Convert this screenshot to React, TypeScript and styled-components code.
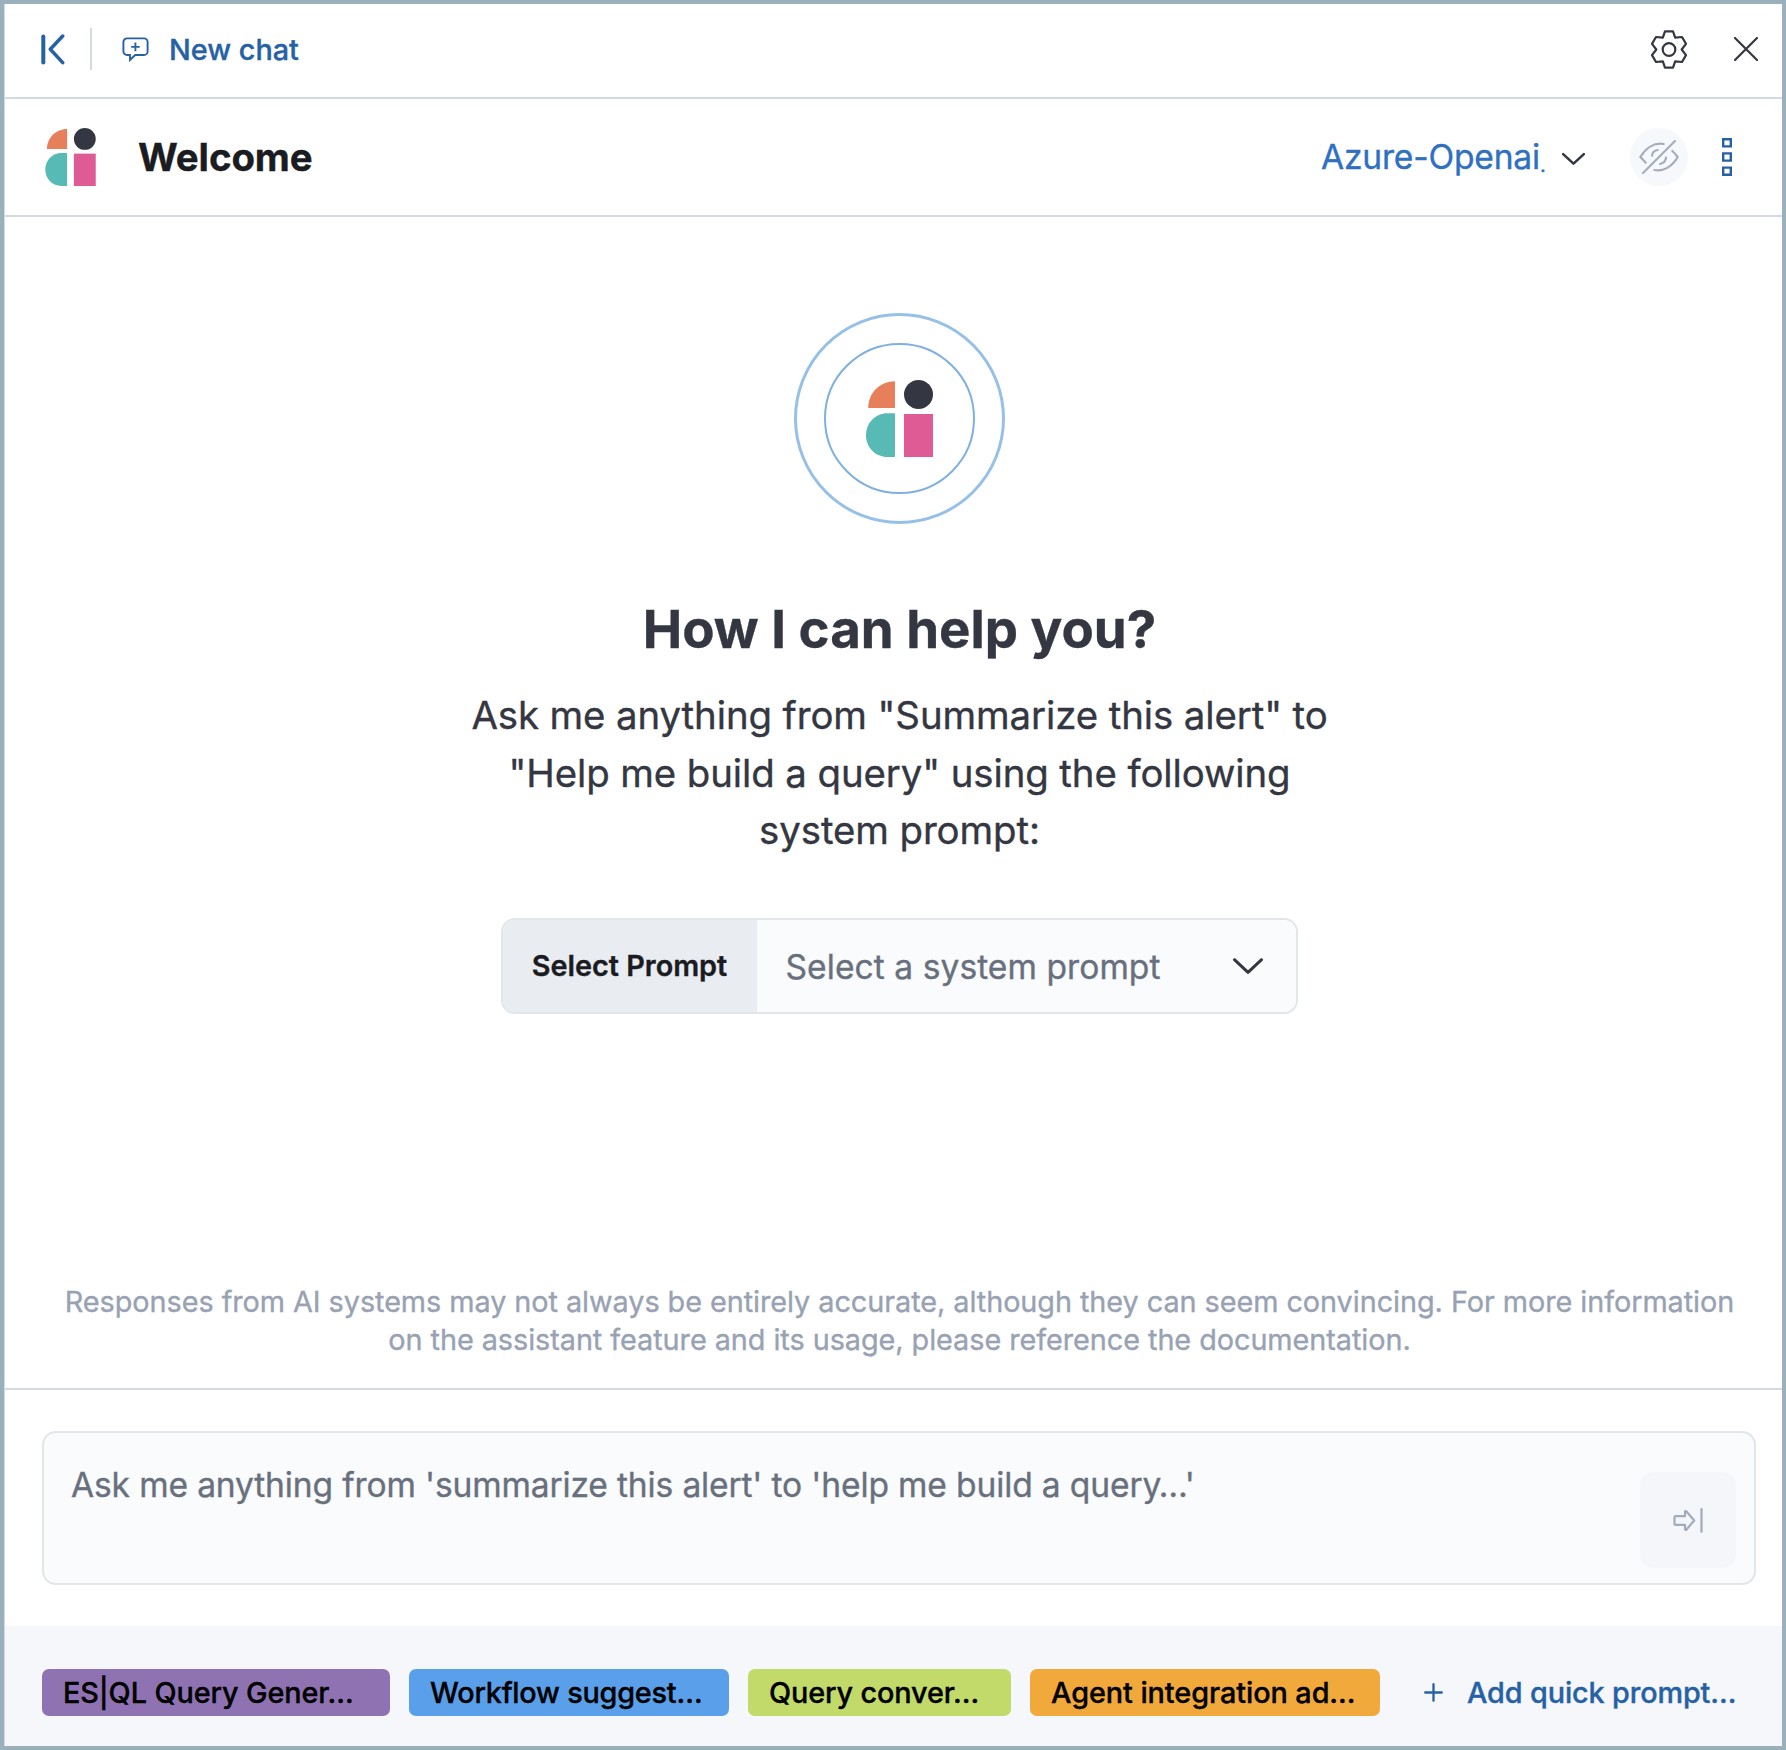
import React from 'react';
import styled, { createGlobalStyle } from 'styled-components';

const colors = {
  frame: '#9ab1bd',
  line: '#d3dae6',
  primary: '#2761a5',
  link: '#2f70c0',
  ink: '#343741',
  title: '#1a1c21',
  subdued: '#69707d',
  muted: '#98a2b3',
};

const GlobalStyle = createGlobalStyle`
  *, *::before, *::after { box-sizing: border-box; }
  body {
    margin: 0;
    background: #fff;
    font-family: Inter, 'Liberation Sans', sans-serif;
    font-weight: 400;
    -webkit-text-stroke-width: 0.35px;
    color: ${colors.ink};
  }
  button { font: inherit; color: inherit; border: 0; background: none; padding: 0; }
  h1, h2, p { margin: 0; }
  svg { display: block; flex: none; }
`;

const Frame = styled.div`
  width: 1786px;
  height: 1750px;
  border: 4px solid ${colors.frame};
  overflow: hidden;
`;

const Panel = styled.div`
  height: 100%;
  border-left: 1px solid ${colors.line};
  display: flex;
  flex-direction: column;
  background: #fff;
`;

const TopBar = styled.header`
  flex: none;
  height: 95px;
  padding: 0 24px 3px 36px;
  border-bottom: 2px solid ${colors.line};
  display: flex;
  align-items: center;
`;

const VerticalRule = styled.span`
  width: 2px;
  height: 42px;
  margin: 0 30px 0 25px;
  background: ${colors.line};
`;

const NewChat = styled.button`
  display: flex;
  align-items: center;
  gap: 20px;
  color: ${colors.primary};
  font-size: 28.8px;
  font-weight: 500;
  line-height: 44px;
`;

const NewChatLabel = styled.span`
  padding-top: 1px;
`;

const Actions = styled.div<{ $gap: number }>`
  margin-left: auto;
  display: flex;
  align-items: center;
  gap: ${(p) => p.$gap}px;
`;

const TitleBar = styled.header`
  flex: none;
  height: 118px;
  padding: 0 50px 0 40px;
  border-bottom: 2px solid ${colors.line};
  display: flex;
  align-items: center;
`;

const Title = styled.h1`
  margin-left: 42px;
  font-size: 38.4px;
  line-height: 48px;
  font-weight: 700;
  letter-spacing: -0.1px;
  color: ${colors.title};
`;

const Connector = styled.button`
  display: flex;
  align-items: center;
  gap: 17px;

  svg { margin-top: 4px; }
`;

const ConnectorName = styled.span`
  width: 223px;
  white-space: nowrap;
  text-align: left;
  font-size: 33.6px;
  line-height: 48px;
  letter-spacing: -0.2px;
  color: ${colors.link};
`;

const NameTail = styled.span`
  font-size: 20px;
  line-height: 1;
  vertical-align: -3px;
`;

const RoundButton = styled.button`
  width: 58px;
  height: 58px;
  margin-left: 44px;
  border-radius: 50%;
  background: #f7f8fc;
  display: grid;
  place-items: center;
`;

const MenuButton = styled.button`
  margin-left: 34px;
`;

const Main = styled.main`
  flex: 1;
  padding: 96px 41px 29px 53px;
  display: flex;
  flex-direction: column;
  align-items: center;
  text-align: center;
`;

const OuterRing = styled.div`
  width: 211px;
  height: 211px;
  border: 3px solid #97c0e6;
  border-radius: 50%;
  display: grid;
  place-items: center;
`;

const InnerRing = styled.div`
  width: 151px;
  height: 151px;
  border: 2px solid #7eb0e0;
  border-radius: 50%;
  display: grid;
  place-items: center;
`;

const Heading = styled.h2`
  margin-top: 73px;
  font-size: 52.8px;
  line-height: 64px;
  font-weight: 700;
`;

const Lead = styled.p`
  width: 864px;
  margin-top: 26px;
  font-size: 38.4px;
  line-height: 57.6px;
  letter-spacing: -0.1px;
`;

const PromptSelect = styled.div`
  width: 797px;
  height: 96px;
  margin-top: 58px;
  border: 2px solid #e2e5e9;
  border-radius: 14px;
  overflow: hidden;
  display: flex;
`;

const PromptLabel = styled.span`
  width: 254px;
  padding-right: 1px;
  background: #e9ecf1;
  color: ${colors.title};
  font-size: 28.8px;
  font-weight: 600;
  line-height: 92px;
`;

const PromptValue = styled.span`
  flex: 1;
  padding: 2px 31px 0 28.5px;
  background: #fafbfd;
  display: flex;
  align-items: center;
  justify-content: space-between;
  color: ${colors.subdued};
  font-size: 33.6px;
  letter-spacing: 0.05px;

  svg { margin-top: -1px; }
`;

const Disclaimer = styled.p`
  margin-top: auto;
  font-size: 28.8px;
  line-height: 38px;
  letter-spacing: -0.045px;
  color: ${colors.muted};
`;

const Composer = styled.section`
  flex: none;
  height: 238px;
  padding: 41px 26px 0 37px;
  border-top: 2px solid ${colors.line};
`;

const PromptInput = styled.div`
  height: 154px;
  padding: 28px 18px 15px 27px;
  border: 2px solid #e2e5e9;
  border-radius: 14px;
  background: #fafbfd;
  display: flex;
  justify-content: space-between;
`;

const Placeholder = styled.span`
  font-size: 33.6px;
  line-height: 48px;
  letter-spacing: -0.15px;
  color: ${colors.subdued};
`;

const SendButton = styled.button`
  align-self: flex-end;
  width: 96px;
  height: 96px;
  border-radius: 14px;
  background: #f4f6fa;
  display: grid;
  place-items: center;
`;

const QuickPrompts = styled.footer`
  flex: none;
  height: 120px;
  padding: 43px 0 0 37px;
  background: #f5f7fb;
  display: flex;
  gap: 19px;
  font-size: 28.8px;
  font-weight: 500;
  line-height: 47px;
  white-space: nowrap;
`;

const Badge = styled.button<{ $color: string; $width: number; $tracking?: number }>`
  width: ${(p) => p.$width}px;
  height: 47px;
  padding: 0 21px;
  border-radius: 7px;
  background: ${(p) => p.$color};
  letter-spacing: ${(p) => p.$tracking ?? -0.06}px;
  text-align: left;
  color: #000;
`;

const AddPrompt = styled.button`
  height: 47px;
  margin-left: 25px;
  display: flex;
  align-items: center;
  gap: 24px;
  letter-spacing: -0.12px;
  color: ${colors.primary};
`;

const AssistantLogo = ({ width, height }: { width: number; height: number }) => (
  <svg width={width} height={height} viewBox="0 0 67 77">
    <path d="M29 1.3V28H2.2C2.2 13 14 1.3 29 1.3Z" fill="#e87f5b" />
    <path d="M29 33.3V77H21.5C9.5 77 0 67.5 0 55.2S9.5 33.3 21.5 33.3Z" fill="#58bab4" />
    <circle cx="52.5" cy="14.5" r="14.5" fill="#343741" />
    <path d="M38 34h29v43H38z" fill="#de5b95" />
  </svg>
);

const CollapseIcon = () => (
  <svg width="24" height="31" viewBox="0 0 24 31" fill="none" stroke={colors.primary} strokeLinecap="round" strokeLinejoin="round">
    <path d="M2.3 2.5v26" strokeWidth="4" />
    <path d="M21.7 2 9.3 15.3 21.7 28.6" strokeWidth="3.5" />
  </svg>
);

const NewChatIcon = () => (
  <svg width="27" height="25" viewBox="0 0 27 25" fill="none" stroke={colors.primary} strokeWidth="1.9">
    <path d="M5 1.4h17a3.6 3.6 0 0 1 3.6 3.6v9.4a3.6 3.6 0 0 1-3.6 3.6h-8.8L8 23v-5H5a3.6 3.6 0 0 1-3.6-3.6V5A3.6 3.6 0 0 1 5 1.4Z" />
    <path d="M13.4 5.6v8.6M9.1 9.9h8.6" />
  </svg>
);

const GearIcon = () => (
  <svg width="38" height="39" viewBox="0 0 114 117" fill="none" stroke={colors.ink} strokeWidth="6.6" strokeLinejoin="round">
    <path d="M45 4h24l6.5 19L96 21l12 20.500L95 58.500 108 75.500 96 96l-20.500-2L69 113H45l-6.500-19L18 96 6 75.500 19 58.500 6 41.500 18 21l20.500 2Z" />
    <circle cx="57" cy="58.500" r="19" />
  </svg>
);

const CloseIcon = () => (
  <svg width="24" height="24" viewBox="0 0 24 24" fill="none" stroke={colors.ink} strokeWidth="2.2" strokeLinecap="round">
    <path d="m1 1 22 22M23 1 1 23" />
  </svg>
);

const ChevronIcon = ({ width, stroke }: { width: number; stroke: number }) => (
  <svg width={width} height={width / 2 + 2} viewBox="0 0 24 14" fill="none" stroke={colors.ink} strokeWidth={stroke} strokeLinecap="round" strokeLinejoin="round">
    <path d="m2 2 10 9.300L22 2" />
  </svg>
);

const EyeClosedIcon = () => (
  <svg width="40" height="36" viewBox="0 0 120 108" fill="none" stroke="#a5adbc" strokeWidth="6.6" strokeLinecap="round">
    <path d="M12 102 108 6" />
    <path d="M20 71C14 65 9 59 4 54 20 28 45 10 74 15" strokeLinejoin="round" />
    <path d="M46 93C74 99 101 81 116 54 111 47 106 41 100 36" strokeLinejoin="round" />
    <path d="M39 50C40 41 47 34 56 33M81 56C80 65 73 73 63 75" />
  </svg>
);

const MenuIcon = () => (
  <svg width="10" height="38" viewBox="0 0 10 38" fill="none" stroke={colors.primary} strokeWidth="2.4">
    <path d="M1.200 1.200h7.600v7.200H1.200zM1.200 15.400h7.600v7.200H1.200zM1.200 29.600h7.600v7.200H1.200z" />
  </svg>
);

const SendIcon = () => (
  <svg width="30" height="25" viewBox="0 0 30 25" fill="none" stroke="#a3abba" strokeWidth="2.2" strokeLinecap="round" strokeLinejoin="round">
    <path d="M2.500 8.200H12V4c0-1 .8-1.300 1.500-.5L21.200 12.500 13.500 21.500c-.7.8-1.500.500-1.500-.5v-4.200H2.500c-.6 0-1-.4-1-1V9.200c0-.6.4-1 1-1Z" />
    <path d="M28.500 1.200v22.600" />
  </svg>
);

const PlusIcon = () => (
  <svg width="19" height="19" viewBox="0 0 19 19" fill="none" stroke={colors.primary} strokeWidth="2.300" strokeLinecap="round">
    <path d="M9.500 1.200v16.600M1.200 9.500h16.600" />
  </svg>
);

export default function App() {
  return (
    <>
      <GlobalStyle />
      <Frame>
        <Panel>
          <TopBar>
            <CollapseIcon />
            <VerticalRule />
            <NewChat>
              <NewChatIcon />
              <NewChatLabel>New chat</NewChatLabel>
            </NewChat>
            <Actions $gap={46}>
              <GearIcon />
              <CloseIcon />
            </Actions>
          </TopBar>

          <TitleBar>
            <AssistantLogo width={51} height={58} />
            <Title>Welcome</Title>
            <Actions $gap={0}>
              <Connector>
                <ConnectorName>
                  Azure-Openai<NameTail>.</NameTail>
                </ConnectorName>
                <ChevronIcon width={25} stroke={2.4} />
              </Connector>
              <RoundButton>
                <EyeClosedIcon />
              </RoundButton>
              <MenuButton>
                <MenuIcon />
              </MenuButton>
            </Actions>
          </TitleBar>

          <Main>
            <OuterRing>
              <InnerRing>
                <AssistantLogo width={67} height={77} />
              </InnerRing>
            </OuterRing>
            <Heading>How I can help you?</Heading>
            <Lead>
              Ask me anything from "Summarize this alert" to "Help me build a query" using the following system prompt:
            </Lead>
            <PromptSelect>
              <PromptLabel>Select Prompt</PromptLabel>
              <PromptValue>
                Select a system prompt
                <ChevronIcon width={34} stroke={2.2} />
              </PromptValue>
            </PromptSelect>
            <Disclaimer>
              Responses from AI systems may not always be entirely accurate, although they can seem convincing. For more
              information on the assistant feature and its usage, please reference the documentation.
            </Disclaimer>
          </Main>

          <Composer>
            <PromptInput>
              <Placeholder>Ask me anything from 'summarize this alert' to 'help me build a query…'</Placeholder>
              <SendButton>
                <SendIcon />
              </SendButton>
            </PromptInput>
          </Composer>

          <QuickPrompts>
            <Badge $color="#8f72b2" $width={348} $tracking={-0.1}>ES|QL Query Gener…</Badge>
            <Badge $color="#599fea" $width={320} $tracking={-0.22}>Workflow suggest…</Badge>
            <Badge $color="#c2da69" $width={263} $tracking={-0.12}>Query conver…</Badge>
            <Badge $color="#f1a93b" $width={350}>Agent integration ad…</Badge>
            <AddPrompt>
              <PlusIcon />
              Add quick prompt…
            </AddPrompt>
          </QuickPrompts>
        </Panel>
      </Frame>
    </>
  );
}
